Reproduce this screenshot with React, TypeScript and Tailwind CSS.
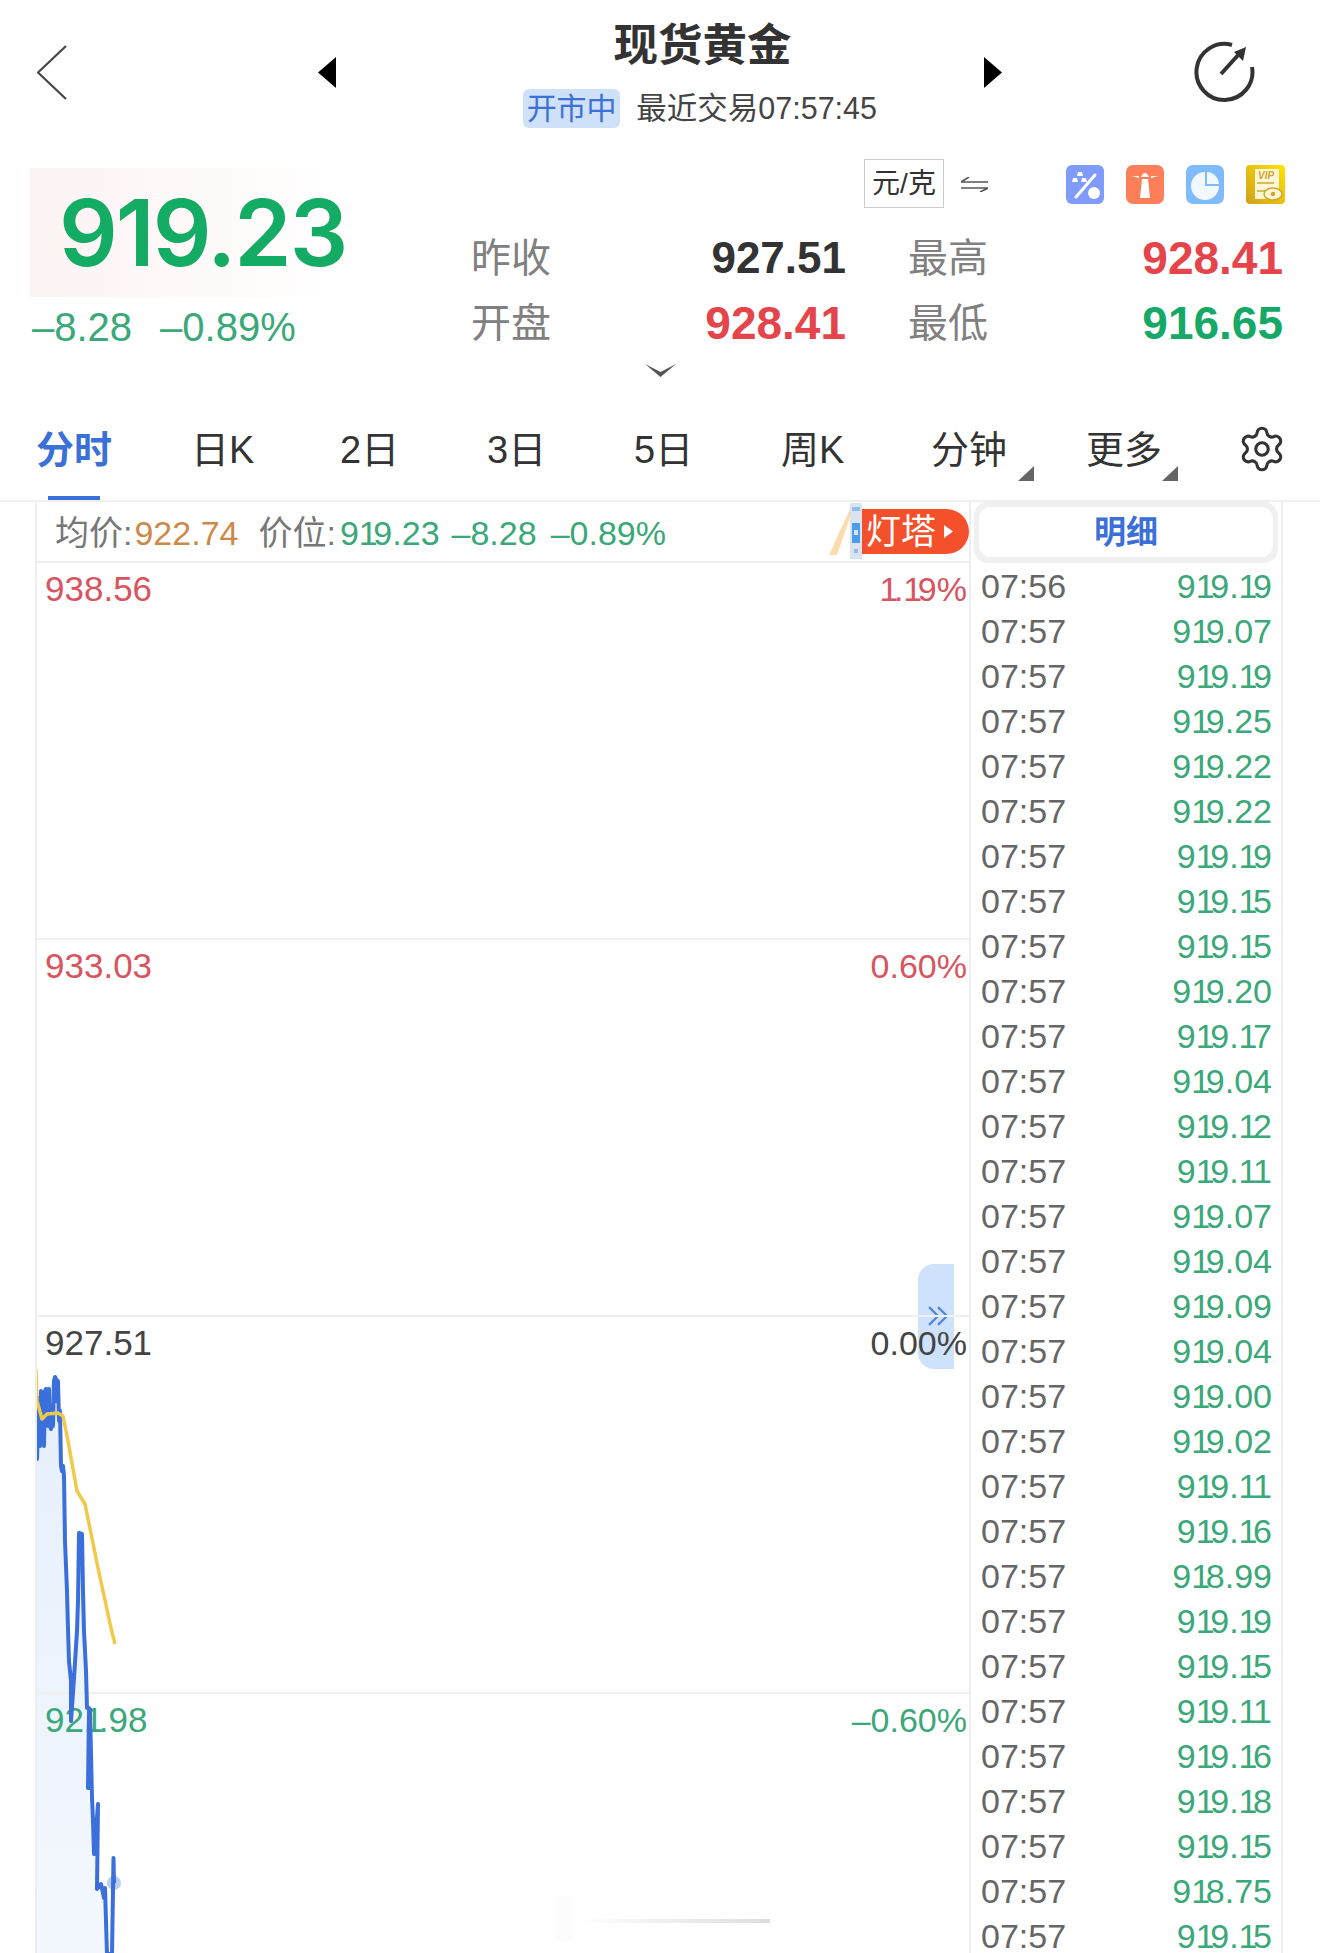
import { Settings } from 'lucide-react'

const TABS = ['分时', '日K', '2日', '3日', '5日', '周K', '分钟', '更多']

const PRICES = [
  '919.19', '919.07', '919.19', '919.25', '919.22', '919.22', '919.19', '919.15', '919.15', '919.20', '919.17',
  '919.04', '919.12', '919.11', '919.07', '919.04', '919.09', '919.04', '919.00', '919.02', '919.11', '919.16',
  '918.99', '919.19', '919.15', '919.11', '919.16', '919.18', '919.15', '918.75', '919.15',
]

const LEVELS = [
  { left: '938.56', right: '1.19%', color: 'text-[#d8545f]' },
  { left: '933.03', right: '0.60%', color: 'text-[#d8545f]' },
  { left: '927.51', right: '0.00%', color: 'text-[#444444]' },
  { left: '921.98', right: '–0.60%', color: 'text-[#3aa878]' },
]

// the digit 1 is narrower in the reference than in Liberation Sans
function Num({ v }: { v: string }) {
  return (
    <>
      {v.split('').map((c, i) =>
        c === '1' && i < v.length - 1 ? (
          <span key={i} className="tracking-[-0.13em]">{c}</span>
        ) : (
          <span key={i}>{c}</span>
        ),
      )}
    </>
  )
}

function Stat({ label, value, color }: { label: string; value: string; color: string }) {
  return (
    <div className="flex h-[65px] items-center justify-between">
      <span className="text-[40px] leading-none text-[#808080]">{label}</span>
      <span className={`leading-none font-bold ${color}`}>{value}</span>
    </div>
  )
}

function IconPercent() {
  return (
    <svg width="38" height="39" viewBox="0 0 38 39">
      <rect width="38" height="39" rx="6" fill="#7f9bfb" />
      <path d="M10 32 L29 10" stroke="#fff" strokeWidth="3" strokeLinecap="round" />
      <circle cx="28" cy="28" r="6" fill="#fff" />
      <path d="M12 7 h4 l1 4 h-6z M7 13 h4 l1 4 H6z M16 13 h4 l1 4 h-6z" fill="#fff" />
    </svg>
  )
}

function IconTower() {
  return (
    <svg width="38" height="39" viewBox="0 0 38 39">
      <rect width="38" height="39" rx="7" fill="#fd7f5a" />
      <path d="M14 33 L16 14 H22 L24 33z" fill="#fff" />
      <path d="M15 12 Q19 4 23 12z" fill="#fff" />
      <path d="M6 11 L13 13 V11z M32 11 L25 13 V11z" fill="#fff" />
    </svg>
  )
}

function IconPie() {
  return (
    <svg width="38" height="39" viewBox="0 0 38 39">
      <rect width="38" height="39" rx="7" fill="#7fbafd" />
      <path d="M19 9 V21 H33 A14 14 0 1 1 19 7z" fill="#f2f8ff" />
      <path d="M21 7 A13 13 0 0 1 33 19 H21z" fill="#f2f8ff" />
    </svg>
  )
}

function IconVip() {
  return (
    <svg width="39" height="39" viewBox="0 0 39 39">
      <defs>
        <linearGradient id="vip" x1="0" y1="1" x2="1" y2="0">
          <stop offset="0" stopColor="#d0a01e" />
          <stop offset="1" stopColor="#ffe300" />
        </linearGradient>
      </defs>
      <rect width="39" height="39" rx="4" fill="url(#vip)" />
      <rect x="9" y="4" width="24" height="30" fill="#fff8d8" />
      <text x="12" y="14" fontSize="10" fontWeight="700" fontStyle="italic" fill="#d3a62a">VIP</text>
      <path d="M11 18 H28 M11 26 H19" stroke="#d3a62a" strokeWidth="1.5" />
      <ellipse cx="27" cy="29" rx="9" ry="6" fill="#fff8d8" stroke="#d3a62a" strokeWidth="1.5" />
      <circle cx="27" cy="29" r="2.2" fill="#d3a62a" />
    </svg>
  )
}

export default function App() {
  return (
    <div className="h-[1953px] w-[1320px] overflow-hidden bg-white font-['Liberation_Sans','Noto_Sans_CJK_SC',sans-serif] text-[#333333]">
      {/* header */}
      <div className="flex h-[128px] items-center pt-[16px] pl-[37px]">
        <svg width="30" height="55" viewBox="0 0 30 55" className="shrink-0">
          <path d="M29 1 L1 27.5 L29 54" fill="none" stroke="#444" strokeWidth="2.2" />
        </svg>
        <svg width="18" height="31" viewBox="0 0 18 31" className="ml-[251px] shrink-0">
          <path d="M18 0 V31 L0 15.5z" fill="#000" />
        </svg>
        <div className="ml-[187px] flex w-[354px] shrink-0 flex-col items-center">
          <div className="h-[60px] pl-[5px] text-[44.5px] leading-[60px] font-bold">现货黄金</div>
          <div className="mt-[13px] flex h-[39px] w-full items-center">
            <span className="flex h-[39px] w-[101px] items-center justify-center rounded-[6px] bg-[#cfe0f9] text-[30px] leading-none text-[#3b72d4]">开市中</span>
            <span className="ml-[16px] text-[30.5px] leading-none whitespace-nowrap text-[#444444]">最近交易07:57:45</span>
          </div>
        </div>
        <svg width="18" height="31" viewBox="0 0 18 31" className="ml-[107px] shrink-0">
          <path d="M0 0 V31 L18 15.5z" fill="#000" />
        </svg>
        <svg width="62" height="62" viewBox="0 0 62 62" className="ml-[192px] shrink-0">
          <path d="M38 4 A28 28 0 1 0 58 26" fill="none" stroke="#333" strokeWidth="4" />
          <path d="M27 33 L46 12" stroke="#333" strokeWidth="4" />
          <path d="M40 11 L52 6 L49 20z" fill="#333" />
        </svg>
      </div>

      {/* quote */}
      <div className="flex h-[232px]">
        <div className="w-[471px] shrink-0 pt-[40px] pl-[30px]">
          <div className="flex h-[129px] w-[330px] items-center bg-gradient-to-r from-[#fdf3f3] to-white pl-[29px]">
            <span className="font-['Inter'] text-[92px] leading-none font-semibold tracking-[-2px] text-[#14ab64]">919.23</span>
          </div>
          <div className="mt-[10px] flex h-[40px] items-center gap-[28px] pl-[2px] text-[40px] leading-none text-[#3aa878]">
            <span>–8.28</span>
            <span>–0.89%</span>
          </div>
        </div>
        <div className="w-[849px] shrink-0 pt-[31px]">
          <div className="flex items-start">
            <div className="ml-[393px] flex h-[49px] w-[80px] items-center justify-center border border-[#cccccc] text-[28px] leading-none text-[#333333]">元/克</div>
            <svg width="27" height="15" viewBox="0 0 27 15" className="mt-[18px] ml-[17px]">
              <path d="M27 5 H0 L8 0 M0 11 H27 L19 15" fill="none" stroke="#555" strokeWidth="1.6" />
            </svg>
            <div className="mt-[6px] ml-[78px] flex gap-[22px]">
              <IconPercent />
              <IconTower />
              <IconPie />
              <IconVip />
            </div>
          </div>
          <div className="mt-[17px] grid grid-cols-[375px_375px] gap-x-[62px]">
            <Stat label="昨收" value="927.51" color="text-[44px] text-[#333333]" />
            <Stat label="最高" value="928.41" color="text-[46px] text-[#e5444a]" />
            <Stat label="开盘" value="928.41" color="text-[46px] text-[#e5444a]" />
            <Stat label="最低" value="916.65" color="text-[46px] text-[#16a866]" />
          </div>
        </div>
      </div>

      {/* collapse chevron */}
      <div className="flex h-[20px] justify-center pt-[4px]">
        <svg width="31" height="13" viewBox="0 0 31 13">
          <path d="M0 0 L15.5 8 L31 0 L15.5 13z" fill="#555" />
        </svg>
      </div>

      {/* tabs */}
      <div className="relative grid h-[122px] grid-cols-[155px_149px_147px_147px_147px_150px_155px_153px_44px] border-b-2 border-[#f0f0f0] pt-[48px] pl-[36px]">
        {TABS.map((t, i) => (
          <div key={t} className={`relative h-[44px] text-[38px] leading-[44px] whitespace-nowrap ${i === 0 ? 'font-bold text-[#3a70d8]' : 'text-[#333333]'}`}>
            {t}
            {i === 6 && (
              <svg width="16" height="15" viewBox="0 0 16 15" className="absolute top-[38px] left-[87px]">
                <path d="M16 0 V15 H0z" fill="#666" />
              </svg>
            )}
            {i === 7 && (
              <svg width="16" height="15" viewBox="0 0 16 15" className="absolute top-[38px] left-[76px]">
                <path d="M16 0 V15 H0z" fill="#666" />
              </svg>
            )}
          </div>
        ))}
        <Settings size={50} strokeWidth={1.5} className="-mt-[4px] -ml-[2px] text-[#333333]" />
        <div className="absolute bottom-0 left-[48px] h-[4px] w-[52px] bg-[#3a70d8]" />
      </div>

      <div className="flex">
        {/* chart */}
        <div className="ml-[35px] w-[934px] shrink-0 border-l-2 border-[#eeeeee]">
          <div className="flex h-[61px] items-center justify-between border-b-2 border-[#eeeeee] pl-[18px]">
            <div className="flex items-center whitespace-nowrap pt-[2px] text-[34px] leading-none">
              <span className="text-[#777777]">均价:</span>
              <span className="ml-[2px] text-[#cc8a4a]">922.74</span>
              <span className="ml-[20px] text-[#777777]">价位:</span>
              <span className="ml-[4px] text-[#3aa878]"><Num v="919.23" /></span>
              <span className="ml-[12px] text-[#3aa878]">–8.28</span>
              <span className="ml-[14px] text-[#3aa878]">–0.89%</span>
            </div>
            <div className="relative flex h-[45px] w-[111px] items-center rounded-r-[23px] bg-[#f5502c] pl-[8px] text-[35px] leading-none text-white">
              灯塔
              <svg width="9" height="13" viewBox="0 0 9 13" className="ml-[8px]">
                <path d="M0 0 L9 6.5 L0 13z" fill="#fff" />
              </svg>
              <svg width="34" height="56" viewBox="0 0 34 56" className="absolute -top-[6px] -left-[29px]">
                <path d="M21 6 L0 52 H8 L24 6z" fill="#fcdcae" />
                <rect x="21" y="0" width="12" height="56" fill="#dbe3ee" />
                <rect x="23" y="4" width="8" height="4" fill="#8fbdf0" />
                <rect x="23" y="20" width="8" height="20" fill="#4a9df0" />
                <rect x="25" y="27" width="4" height="5" fill="#dbe3ee" />
                <rect x="25" y="46" width="4" height="4" fill="#8fbdf0" />
              </svg>
            </div>
          </div>

          <div className="relative">
            <div className="absolute top-[701px] left-[881px] flex h-[105px] w-[36px] items-start justify-center rounded-l-[16px] bg-[#cfe2fb] pt-[42px] pl-[3px]">
              <svg width="20" height="20" viewBox="0 0 18 18">
                <path d="M1 1 L9 9 L1 17 M9 1 L17 9 L9 17" fill="none" stroke="#4f86dc" strokeWidth="2" />
              </svg>
            </div>

            {/* area under the price line, text sits on top of it */}
            <svg width="934" height="1391" viewBox="37 562 934 1391" className="absolute top-0 left-0">
              <defs>
                <linearGradient id="area" x1="0" y1="0" x2="0" y2="1">
                  <stop offset="0" stopColor="#e5effc" />
                  <stop offset="1" stopColor="#f4f8fe" />
                </linearGradient>
              </defs>
              <path
                d="M36 1395 L38 1400 L45 1388 L54 1380 L56 1378 L62 1470 L65 1540 L68 1628 L71 1720 L79 1532 L84 1630 L88 1787 L94 1853 L98 1803 L97 1888 L104 1897 L107 1953 L36 1953z"
                fill="url(#area)"
              />
            </svg>

            {LEVELS.map((row) => (
              <div key={row.left} className={`relative flex h-[377px] justify-between border-b-2 border-[#f0f0f0] pt-[8px] pr-[2px] pl-[8px] text-[35px] leading-[36px] ${row.color}`}>
                <span><Num v={row.left} /></span>
                <span className="text-[34px]"><Num v={row.right} /></span>
              </div>
            ))}

            <svg width="934" height="1391" viewBox="37 562 934 1391" className="absolute top-0 left-0">
              <polyline
                fill="none"
                stroke="#3a6fdc"
                strokeWidth="4"
                strokeLinejoin="round"
                points="37,1395 37,1458 39,1400 40,1445 41,1390 42,1443 43,1392 44,1445 45,1390 46,1388 47,1390 48,1425 49,1388 50,1425 51,1428 52,1425 53,1425 54,1380 55,1376 56,1378 57,1400 58,1380 59,1420 60,1410 61,1465 62,1470 63,1465 64,1475 65,1540 67,1590 68,1628 69,1660 71,1680 71,1720 74,1677 77,1630 78,1600 79,1532 82,1533 83,1590 84,1630 86,1670 87,1707 89,1707 88,1787 90,1787 90,1708 92,1797 93,1820 94,1853 96,1830 98,1803 97,1888 101,1883 104,1897 105,1887 107,1953 112,1953 113.5,1857 114,1882"
              />
              <polyline
                fill="none"
                stroke="#f0c94a"
                strokeWidth="3.5"
                strokeLinejoin="round"
                points="36,1368 37,1400 42,1418 47,1413 58,1412 63,1415 68,1440 77,1490 85,1503 98,1567 111,1627 115,1643"
              />
              <circle cx="114" cy="1882" r="7" fill="#3a6fdc" fillOpacity="0.35" />
            </svg>

            {/* faint watermark left in the capture */}
            <div className="absolute top-[1333px] left-[518px] h-[45px] w-[18px] bg-[#fcfcfc]" />
            <div className="absolute top-[1356px] left-[540px] h-[4px] w-[193px] bg-gradient-to-r from-transparent to-[#dddddd]" />
          </div>
        </div>

        {/* trade list */}
        <div className="w-[314px] shrink-0 border-x-2 border-[#eeeeee]">
          <div className="h-[61px] px-[3px]">
            <div className="h-[61px] rounded-[14px] bg-[#f0f0f0] px-[5px] pt-[5px] pb-[6px]">
              <div className="flex h-[50px] items-center justify-center rounded-[12px] bg-white text-[32px] leading-none font-bold text-[#3a70d8]">明细</div>
            </div>
          </div>
          <div className="pr-[9px] pl-[10px]">
            {PRICES.map((p, i) => (
              <div key={i} className="flex h-[45px] items-center justify-between text-[34px] leading-none">
                <span className="text-[#666666]">{i === 0 ? '07:56' : '07:57'}</span>
                <span className="text-[#3aa878]"><Num v={p} /></span>
              </div>
            ))}
          </div>
        </div>
      </div>
    </div>
  )
}
